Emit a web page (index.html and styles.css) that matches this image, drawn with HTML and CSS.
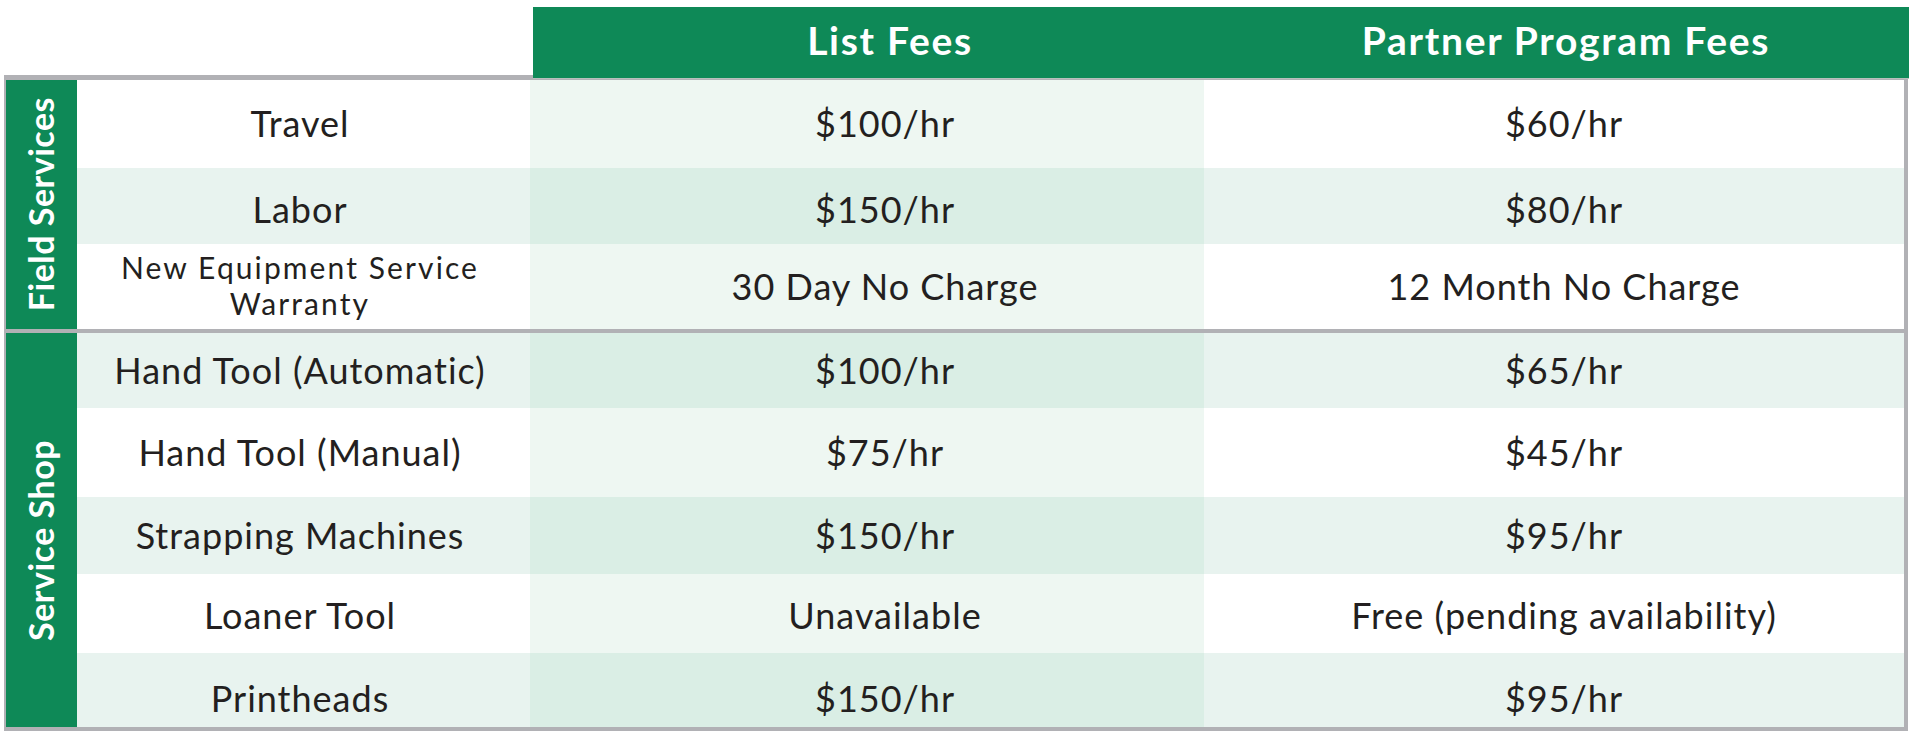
FILE: index.html
```html
<!DOCTYPE html>
<html lang="en">
<head>
<meta charset="utf-8">
<title>Service Fees</title>
<link rel="stylesheet" href="styles.css">
</head>
<body>
<div class="fees">
  <div class="head-row">
    <div class="head-spacer"></div>
    <div class="head-cell head-list">List Fees</div>
    <div class="head-cell head-partner">Partner Program Fees</div>
  </div>
  <div class="body">
    <div class="section">
      <div class="side"><span class="side-text">Field Services</span></div>
      <div class="rows">
        <div class="row h88"><div class="cell label">Travel</div><div class="cell list">$100/hr</div><div class="cell partner">$60/hr</div></div>
        <div class="row alt h76 down8"><div class="cell label">Labor</div><div class="cell list">$150/hr</div><div class="cell partner">$80/hr</div></div>
        <div class="row h85"><div class="cell label small">New Equipment Service<br>Warranty</div><div class="cell list">30 Day No Charge</div><div class="cell partner">12 Month No Charge</div></div>
      </div>
    </div>
    <div class="section section-shop">
      <div class="side"><span class="side-text shop-text">Service Shop</span></div>
      <div class="rows">
        <div class="row alt h75"><div class="cell label">Hand Tool (Automatic)</div><div class="cell list">$100/hr</div><div class="cell partner">$65/hr</div></div>
        <div class="row h89"><div class="cell label">Hand Tool (Manual)</div><div class="cell list">$75/hr</div><div class="cell partner">$45/hr</div></div>
        <div class="row alt h77"><div class="cell label">Strapping Machines</div><div class="cell list">$150/hr</div><div class="cell partner">$95/hr</div></div>
        <div class="row h79 down4"><div class="cell label">Loaner Tool</div><div class="cell list">Unavailable</div><div class="cell partner">Free (pending availability)</div></div>
        <div class="row alt h74 down18"><div class="cell label">Printheads</div><div class="cell list">$150/hr</div><div class="cell partner">$95/hr</div></div>
      </div>
    </div>
  </div>
</div>
</body>
</html>
```

FILE: styles.css
```css
html, body {
  margin: 0;
  padding: 0;
  background: #ffffff;
}

.fees {
  padding: 7px 0 0 4px;
  width: 1905px;
  font-family: "Lato", "Liberation Sans", sans-serif;
  color: #231f20;
}

.head-row {
  display: grid;
  grid-template-columns: 529px 671px 705px;
  height: 72px;
  position: relative;
  z-index: 1;
  margin-bottom: -4px;
}

.head-cell {
  background: #0e8957;
  color: #ffffff;
  font-weight: 700;
  font-size: 39px;
  letter-spacing: 1.7px;
  display: flex;
  align-items: center;
  justify-content: center;
  border-bottom: 1px solid #b8c0bc;
  box-sizing: border-box;
  padding-bottom: 6px;
}

.head-list {
  padding-left: 43px;
}

.head-partner {
  padding-left: 19px;
}

.body {
  width: 1898px;
  border-style: solid;
  border-color: #b1b1b5;
  border-width: 5px 4px 4px 2px;
}

.section {
  display: grid;
  grid-template-columns: 71px 1fr;
}

.section-shop {
  border-top: 4px solid #b1b1b5;
}

.side {
  background: #0e8957;
  display: flex;
  align-items: center;
  justify-content: center;
}

.side-text {
  writing-mode: vertical-rl;
  transform: rotate(180deg);
  color: #ffffff;
  font-weight: 700;
  font-size: 34px;
  white-space: nowrap;
  letter-spacing: 0.5px;
  margin-right: 3px;
}

.shop-text {
  margin-top: 20px;
}

.rows {
  display: flex;
  flex-direction: column;
}

.row {
  display: grid;
  grid-template-columns: 453px 674px 700px;
  background: #ffffff;
}

.h88 { height: 88px; }
.h76 { height: 76px; }
.h85 { height: 85px; }
.h75 { height: 75px; }
.h89 { height: 89px; }
.h77 { height: 77px; }
.h79 { height: 79px; }
.h74 { height: 74px; }

.cell {
  display: flex;
  align-items: center;
  justify-content: center;
  text-align: center;
  font-size: 36px;
  letter-spacing: 1px;
  line-height: 1.1;
  box-sizing: border-box;
}

.cell.label {
  padding-right: 7px;
}

.cell.small {
  font-size: 30px;
  letter-spacing: 2.1px;
  line-height: 36px;
  padding-bottom: 4px;
}

.down4 .cell { padding-top: 4px; }
.down8 .cell { padding-top: 8px; }
.down18 .cell { padding-top: 18px; }

.list {
  background: #eef7f2;
  padding-left: 36px;
}

.partner {
  padding-left: 20px;
}

.row.alt .label,
.row.alt .partner {
  background: #e8f3ef;
}

.row.alt .list {
  background: #daeee5;
}
```
